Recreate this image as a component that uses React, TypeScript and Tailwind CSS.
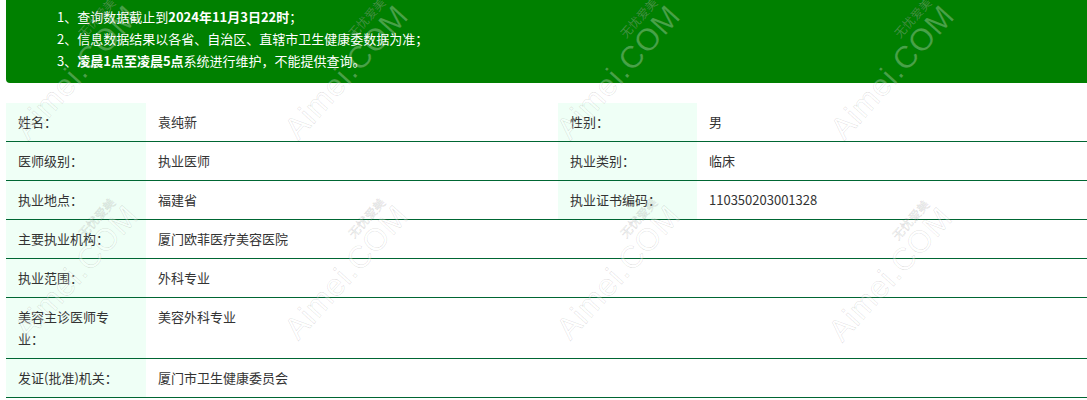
import type { ReactNode } from 'react';

const font = "font-['Microsoft_YaHei','Noto_Sans_CJK_SC',sans-serif]";

const Label = ({ children }: { children: ReactNode }) => (
  <td className="bg-[#effff6] px-[12px] py-[8px] align-top text-[#333]">{children}</td>
);

const Value = ({ children, span }: { children: ReactNode; span?: number }) => (
  <td colSpan={span} className="px-[12px] py-[8px] align-top text-[#333]">{children}</td>
);

// watermark centres (x, y)
const marks: [number, number][] = [
  [72, 68], [342, 68], [614, 68], [888, 68],
  [72, 268], [342, 268], [614, 268], [886, 270],
];

const Watermark = ({ x, y }: { x: number; y: number }) => (
  <div
    className="pointer-events-none absolute flex flex-col items-end font-['Liberation_Sans',sans-serif] leading-none text-[rgba(255,255,255,0.28)] [-webkit-text-stroke:0.6px_rgba(0,0,0,0.13)]"
    style={{ left: x, top: y, transform: 'translate(-50%,-50%) rotate(-48deg)' }}
  >
    <span className="mr-[6px] text-[12px] font-['Noto_Sans_CJK_SC',sans-serif]">无忧爱美</span>
    <span className="text-[31px] tracking-[1px] whitespace-nowrap">Aimei.COM</span>
  </div>
);

export default function App() {
  return (
    <div className={`relative min-h-[400px] overflow-hidden bg-white text-[13px] ${font}`}>
      <div className="pl-[6px]">
        {/* Notice */}
        <div className="rounded-bl-[4px] bg-[#008000] pt-[6px] pb-[11px] pl-[51px] leading-[22px] text-white">
          <p>1、查询数据截止到<b>2024年11月3日22时</b>；</p>
          <p>2、信息数据结果以各省、自治区、直辖市卫生健康委数据为准；</p>
          <p>3、<b>凌晨1点至凌晨5点</b>系统进行维护，不能提供查询。</p>
        </div>

        {/* Info table */}
        <table className="mt-[20px] w-full table-fixed border-collapse leading-[22px]">
          <colgroup>
            <col className="w-[140px]" />
            <col className="w-[412px]" />
            <col className="w-[139px]" />
            <col />
          </colgroup>
          <tbody className="[&>tr]:border-b [&>tr]:border-[#006633]">
            <tr>
              <Label>姓名：</Label>
              <Value>袁纯新</Value>
              <Label>性别：</Label>
              <Value>男</Value>
            </tr>
            <tr>
              <Label>医师级别：</Label>
              <Value>执业医师</Value>
              <Label>执业类别：</Label>
              <Value>临床</Value>
            </tr>
            <tr>
              <Label>执业地点：</Label>
              <Value>福建省</Value>
              <Label>执业证书编码：</Label>
              <Value>110350203001328</Value>
            </tr>
            <tr>
              <Label>主要执业机构：</Label>
              <Value span={3}>厦门欧菲医疗美容医院</Value>
            </tr>
            <tr>
              <Label>执业范围：</Label>
              <Value span={3}>外科专业</Value>
            </tr>
            <tr>
              <Label>美容主诊医师专业：</Label>
              <Value span={3}>美容外科专业</Value>
            </tr>
            <tr>
              <Label>发证(批准)机关：</Label>
              <Value span={3}>厦门市卫生健康委员会</Value>
            </tr>
          </tbody>
        </table>
      </div>

      {marks.map(([x, y], i) => (
        <Watermark key={i} x={x} y={y} />
      ))}
    </div>
  );
}
